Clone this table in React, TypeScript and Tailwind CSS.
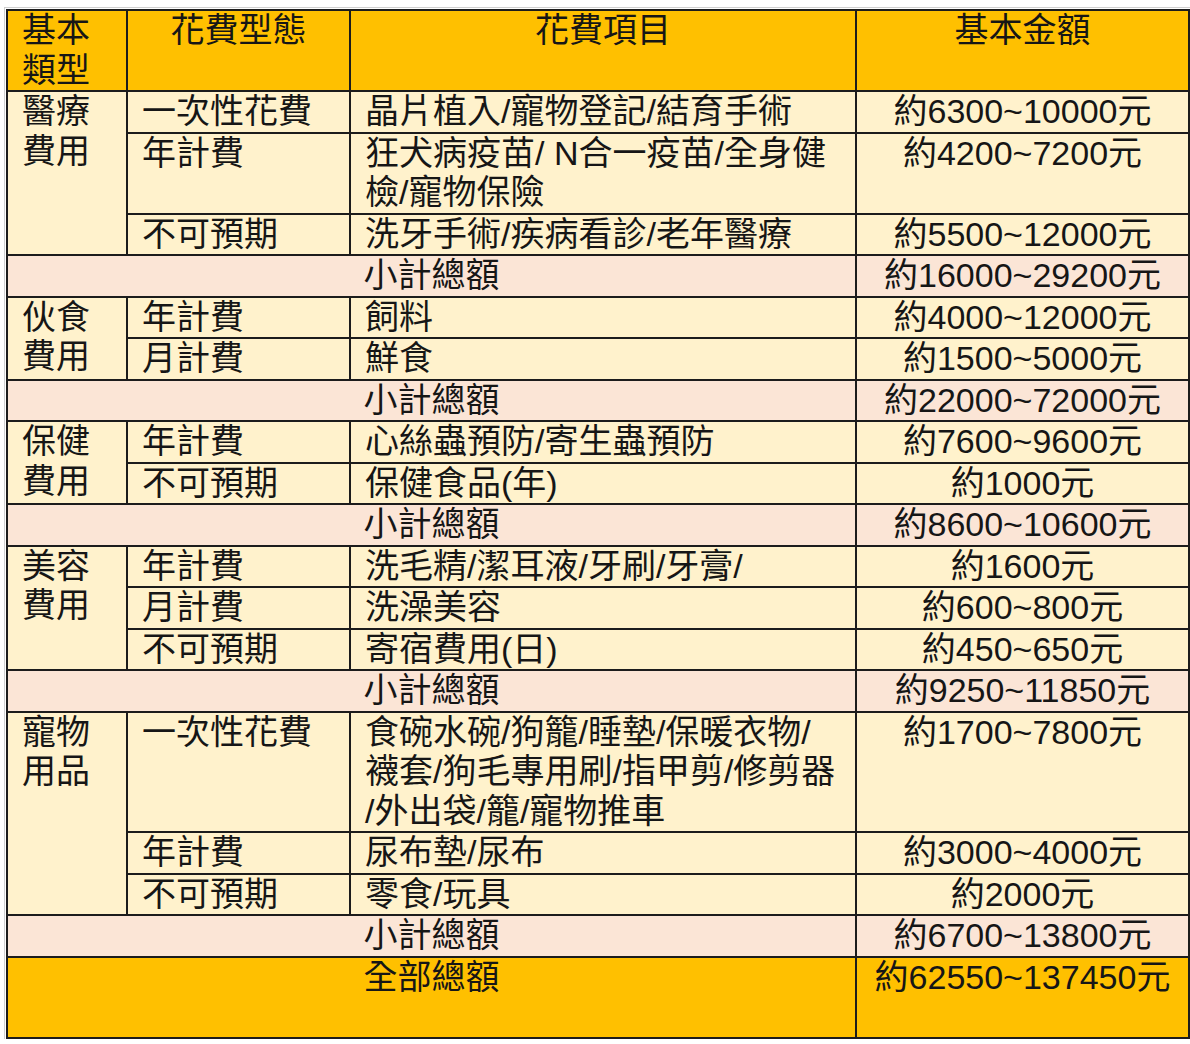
type Item = {
  kind: string;
  lines: string[];
  amount: string;
};

type Group = {
  name: string;
  items: Item[];
  subtotal: string;
};

const groups: Group[] = [
  {
    name: "醫療費用",
    items: [
      { kind: "一次性花費", lines: ["晶片植入/寵物登記/結育手術"], amount: "約6300~10000元" },
      { kind: "年計費", lines: ["狂犬病疫苗/ N合一疫苗/全身健", "檢/寵物保險"], amount: "約4200~7200元" },
      { kind: "不可預期", lines: ["洗牙手術/疾病看診/老年醫療"], amount: "約5500~12000元" },
    ],
    subtotal: "約16000~29200元",
  },
  {
    name: "伙食費用",
    items: [
      { kind: "年計費", lines: ["飼料"], amount: "約4000~12000元" },
      { kind: "月計費", lines: ["鮮食"], amount: "約1500~5000元" },
    ],
    subtotal: "約22000~72000元",
  },
  {
    name: "保健費用",
    items: [
      { kind: "年計費", lines: ["心絲蟲預防/寄生蟲預防"], amount: "約7600~9600元" },
      { kind: "不可預期", lines: ["保健食品(年)"], amount: "約1000元" },
    ],
    subtotal: "約8600~10600元",
  },
  {
    name: "美容費用",
    items: [
      { kind: "年計費", lines: ["洗毛精/潔耳液/牙刷/牙膏/"], amount: "約1600元" },
      { kind: "月計費", lines: ["洗澡美容"], amount: "約600~800元" },
      { kind: "不可預期", lines: ["寄宿費用(日)"], amount: "約450~650元" },
    ],
    subtotal: "約9250~11850元",
  },
  {
    name: "寵物用品",
    items: [
      {
        kind: "一次性花費",
        lines: ["食碗水碗/狗籠/睡墊/保暖衣物/", "襪套/狗毛專用刷/指甲剪/修剪器", "/外出袋/籠/寵物推車"],
        amount: "約1700~7800元",
      },
      { kind: "年計費", lines: ["尿布墊/尿布"], amount: "約3000~4000元" },
      { kind: "不可預期", lines: ["零食/玩具"], amount: "約2000元" },
    ],
    subtotal: "約6700~13800元",
  },
];

const cell = "border-2 border-[#1c1c1c] px-[14px] align-top";

export default function App() {
  return (
    <div className="min-h-[1044px] bg-white pl-[4px] pt-[7px]">
      <div className="border-l border-t border-[#cfcfcf] pl-[1px] pt-[1px]">
        <table
          className="border-collapse text-[34px] leading-[39.5px] text-[#161616]"
          style={{ fontFamily: '"Liberation Sans", "Noto Sans CJK TC", sans-serif' }}
        >
          <colgroup>
            <col className="w-[120px]" />
            <col className="w-[223px]" />
            <col className="w-[506px]" />
            <col className="w-[333px]" />
          </colgroup>
          <thead>
            <tr className="bg-[#ffc000]">
              <th className={`${cell} text-left font-normal`}>基本類型</th>
              <th className={`${cell} text-center font-normal`}>花費型態</th>
              <th className={`${cell} text-center font-normal`}>花費項目</th>
              <th className={`${cell} text-center font-normal`}>基本金額</th>
            </tr>
          </thead>
          <tbody>
            {groups.map((g) => (
              <GroupRows key={g.name} group={g} />
            ))}
            <tr className="bg-[#ffc000]">
              <td colSpan={3} className={`${cell} h-[81px] text-center`}>
                全部總額
              </td>
              <td className={`${cell} whitespace-nowrap text-center`}>約62550~137450元</td>
            </tr>
          </tbody>
        </table>
      </div>
    </div>
  );
}

function GroupRows({ group }: { group: Group }) {
  return (
    <>
      {group.items.map((item, i) => (
        <tr key={item.kind + i} className="bg-[#fff2cc]">
          {i === 0 && (
            <td rowSpan={group.items.length} className={cell}>
              {group.name}
            </td>
          )}
          <td className={cell}>{item.kind}</td>
          <td className={`${cell} whitespace-nowrap`}>
            {item.lines.map((line, j) => (
              <div key={j}>{line}</div>
            ))}
          </td>
          <td className={`${cell} whitespace-nowrap text-center`}>{item.amount}</td>
        </tr>
      ))}
      <tr className="bg-[#fbe5d6]">
        <td colSpan={3} className={`${cell} text-center`}>
          小計總額
        </td>
        <td className={`${cell} whitespace-nowrap text-center`}>{group.subtotal}</td>
      </tr>
    </>
  );
}
